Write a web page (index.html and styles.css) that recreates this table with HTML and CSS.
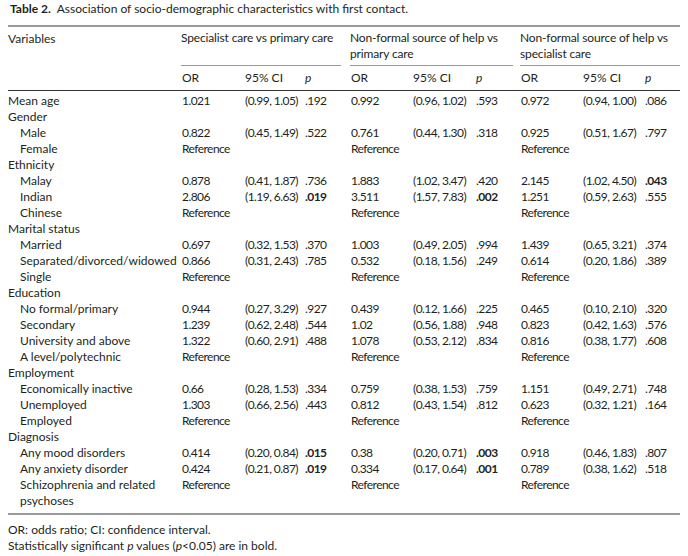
FILE: index.html
```html
<!DOCTYPE html>
<html>
<head>
<meta charset="utf-8">
<link rel="stylesheet" href="styles.css">
</head>
<body>
<div class="caption"><b>Table 2.</b>&nbsp; Association of socio-demographic characteristics with first contact.</div>
<table class="tbl">
<colgroup>
<col class="c0"><col class="c1"><col class="c2"><col class="c3"><col class="c4"><col class="c5"><col class="c6"><col class="c7"><col class="c8"><col class="c9">
</colgroup>
<thead>
<tr class="h1">
<th rowspan="2" class="var">Variables</th>
<th colspan="3" class="grp g1"><div>Specialist care vs primary care<br>&nbsp;</div></th>
<th colspan="3" class="grp g2"><div>Non-formal source of help vs<br>primary care</div></th>
<th colspan="3" class="grp g3"><div>Non-formal source of help vs<br>specialist care</div></th>
</tr>
<tr class="h2">
<th>OR</th><th>95% CI</th><th><i>p</i></th>
<th>OR</th><th>95% CI</th><th><i>p</i></th>
<th>OR</th><th>95% CI</th><th><i>p</i></th>
</tr>
</thead>
<tbody>
<tr class="first"><td>Mean age</td><td>1.021</td><td>(0.99, 1.05)</td><td>.192</td><td>0.992</td><td>(0.96, 1.02)</td><td>.593</td><td>0.972</td><td>(0.94, 1.00)</td><td>.086</td></tr>
<tr><td>Gender</td><td></td><td></td><td></td><td></td><td></td><td></td><td></td><td></td><td></td></tr>
<tr><td class="sub">Male</td><td>0.822</td><td>(0.45, 1.49)</td><td>.522</td><td>0.761</td><td>(0.44, 1.30)</td><td>.318</td><td>0.925</td><td>(0.51, 1.67)</td><td>.797</td></tr>
<tr><td class="sub">Female</td><td colspan="3">Reference</td><td colspan="3">Reference</td><td colspan="3">Reference</td></tr>
<tr><td>Ethnicity</td><td></td><td></td><td></td><td></td><td></td><td></td><td></td><td></td><td></td></tr>
<tr><td class="sub">Malay</td><td>0.878</td><td>(0.41, 1.87)</td><td>.736</td><td>1.883</td><td>(1.02, 3.47)</td><td>.420</td><td>2.145</td><td>(1.02, 4.50)</td><td><b>.043</b></td></tr>
<tr><td class="sub">Indian</td><td>2.806</td><td>(1.19, 6.63)</td><td><b>.019</b></td><td>3.511</td><td>(1.57, 7.83)</td><td><b>.002</b></td><td>1.251</td><td>(0.59, 2.63)</td><td>.555</td></tr>
<tr><td class="sub">Chinese</td><td colspan="3">Reference</td><td colspan="3">Reference</td><td colspan="3">Reference</td></tr>
<tr><td>Marital status</td><td></td><td></td><td></td><td></td><td></td><td></td><td></td><td></td><td></td></tr>
<tr><td class="sub">Married</td><td>0.697</td><td>(0.32, 1.53)</td><td>.370</td><td>1.003</td><td>(0.49, 2.05)</td><td>.994</td><td>1.439</td><td>(0.65, 3.21)</td><td>.374</td></tr>
<tr><td class="sub">Separated/divorced/widowed</td><td>0.866</td><td>(0.31, 2.43)</td><td>.785</td><td>0.532</td><td>(0.18, 1.56)</td><td>.249</td><td>0.614</td><td>(0.20, 1.86)</td><td>.389</td></tr>
<tr><td class="sub">Single</td><td colspan="3">Reference</td><td colspan="3">Reference</td><td colspan="3">Reference</td></tr>
<tr><td>Education</td><td></td><td></td><td></td><td></td><td></td><td></td><td></td><td></td><td></td></tr>
<tr><td class="sub">No formal/primary</td><td>0.944</td><td>(0.27, 3.29)</td><td>.927</td><td>0.439</td><td>(0.12, 1.66)</td><td>.225</td><td>0.465</td><td>(0.10, 2.10)</td><td>.320</td></tr>
<tr><td class="sub">Secondary</td><td>1.239</td><td>(0.62, 2.48)</td><td>.544</td><td>1.02</td><td>(0.56, 1.88)</td><td>.948</td><td>0.823</td><td>(0.42, 1.63)</td><td>.576</td></tr>
<tr><td class="sub">University and above</td><td>1.322</td><td>(0.60, 2.91)</td><td>.488</td><td>1.078</td><td>(0.53, 2.12)</td><td>.834</td><td>0.816</td><td>(0.38, 1.77)</td><td>.608</td></tr>
<tr><td class="sub">A level/polytechnic</td><td colspan="3">Reference</td><td colspan="3">Reference</td><td colspan="3">Reference</td></tr>
<tr><td>Employment</td><td></td><td></td><td></td><td></td><td></td><td></td><td></td><td></td><td></td></tr>
<tr><td class="sub">Economically inactive</td><td>0.66</td><td>(0.28, 1.53)</td><td>.334</td><td>0.759</td><td>(0.38, 1.53)</td><td>.759</td><td>1.151</td><td>(0.49, 2.71)</td><td>.748</td></tr>
<tr><td class="sub">Unemployed</td><td>1.303</td><td>(0.66, 2.56)</td><td>.443</td><td>0.812</td><td>(0.43, 1.54)</td><td>.812</td><td>0.623</td><td>(0.32, 1.21)</td><td>.164</td></tr>
<tr><td class="sub">Employed</td><td colspan="3">Reference</td><td colspan="3">Reference</td><td colspan="3">Reference</td></tr>
<tr><td>Diagnosis</td><td></td><td></td><td></td><td></td><td></td><td></td><td></td><td></td><td></td></tr>
<tr><td class="sub">Any mood disorders</td><td>0.414</td><td>(0.20, 0.84)</td><td><b>.015</b></td><td>0.38</td><td>(0.20, 0.71)</td><td><b>.003</b></td><td>0.918</td><td>(0.46, 1.83)</td><td>.807</td></tr>
<tr><td class="sub">Any anxiety disorder</td><td>0.424</td><td>(0.21, 0.87)</td><td><b>.019</b></td><td>0.334</td><td>(0.17, 0.64)</td><td><b>.001</b></td><td>0.789</td><td>(0.38, 1.62)</td><td>.518</td></tr>
<tr class="last"><td class="sub">Schizophrenia and related<br>psychoses</td><td colspan="3">Reference</td><td colspan="3">Reference</td><td colspan="3">Reference</td></tr>
</tbody>
</table>
<div class="notes">
<div>OR: odds ratio; CI: confidence interval.</div>
<div>Statistically significant <i>p</i> values (<i>p</i>&lt;0.05) are in bold.</div>
</div>
</body>
</html>
```

FILE: styles.css
```css
html, body {
  background: #ffffff;
}
body {
  margin: 0 8px;
  font-family: "Lato", "Open Sans", sans-serif;
  font-size: 12px;
  line-height: 16px;
  color: #231f20;
}
.caption {
  padding: 1px 2px 0;
  margin-bottom: 8px;
}
.caption b {
  font-weight: 700;
}
.tbl {
  width: 672px;
  table-layout: fixed;
  border-collapse: collapse;
  border-top: 2px solid #9a9a9a;
  border-bottom: 2px solid #9a9a9a;
}
.c0 { width: 174px; }
.c1 { width: 63px; }
.c2 { width: 60px; }
.c3 { width: 46px; }
.c4 { width: 62px; }
.c5 { width: 63px; }
.c6 { width: 45px; }
.c7 { width: 62px; }
.c8 { width: 62px; }
.c9 { width: 35px; }
.tbl th, .tbl td {
  padding: 0;
  text-align: left;
  font-weight: 400;
  vertical-align: top;
  white-space: nowrap;
  line-height: 16px;
}
.tbl td:not(:first-child) {
  letter-spacing: -0.55px;
}
.tbl th.var {
  padding-top: 4px;
}
.tbl .grp {
  padding: 3px 0 0 0;
  letter-spacing: -0.15px;
}
.tbl .grp div {
  padding-bottom: 3px;
  border-bottom: 1.5px solid #9a9a9a;
  margin-left: -1px;
}
.tbl .g1 div { margin-right: 10px; }
.tbl .g2 div { margin-right: 8px; }
.tbl .g3 div { margin-right: 0; }
.tbl .h2 th {
  padding-top: 4px;
  padding-bottom: 4px;
  border-bottom: 1.5px solid #333;
}
.tbl thead tr.h1 th.var {
  border-bottom: 1.5px solid #333;
}
.tbl tr.first td {
  padding-top: 2px;
}
.tbl tr.last td {
  padding-bottom: 4px;
}
.tbl td.sub {
  padding-left: 12px;
}
.tbl b {
  font-weight: 700;
}
.notes {
  margin-top: 7px;
}
```
